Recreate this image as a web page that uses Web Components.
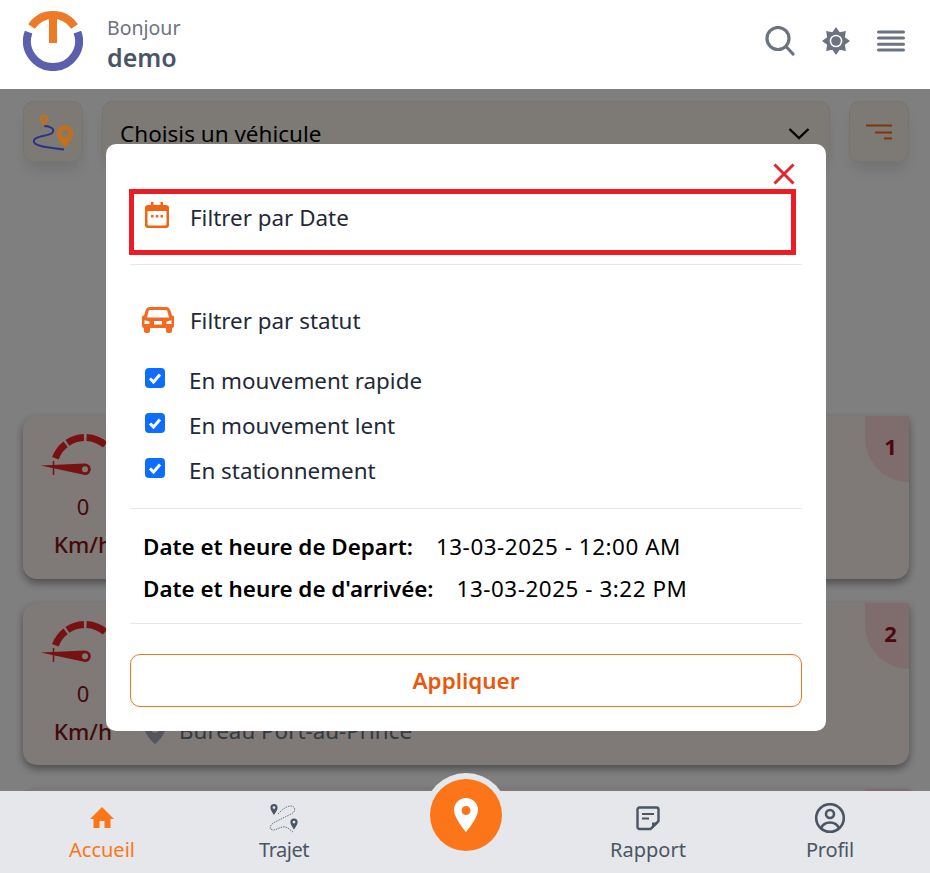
<!DOCTYPE html>
<html lang="fr">
<head>
<meta charset="utf-8">
<title>Filtres</title>
<style>
html, body { margin: 0; padding: 0; }
body { font-family: "Noto Sans", "Open Sans", sans-serif; }
</style>
</head>
<body>
<app-shell>
  <app-header slot="header"></app-header>
  <vehicle-toolbar></vehicle-toolbar>
  <div style="height: 206px"></div>
  <vehicle-card speed="0" rank="1"></vehicle-card>
  <vehicle-card speed="0" rank="2" address="Bureau Port-au-Prince"></vehicle-card>
  <vehicle-card></vehicle-card>
  <filter-modal slot="modal"></filter-modal>
  <bottom-nav slot="nav"></bottom-nav>
</app-shell>

<script>
const PIN = "M12 2a8 8 0 0 0-8 8c0 5.6 8 12 8 12s8-6.4 8-12a8 8 0 0 0-8-8zm0 11a3 3 0 1 1 0-6 3 3 0 0 1 0 6z";

// 8 pointed sun of the header
function sunPoints() {
    const points = [];
    for (let i = 0; i < 16; i++) {
        const radius = i % 2 ? 9.6 : 14;
        const angle = i * Math.PI / 8;
        points.push((14 + radius * Math.sin(angle)).toFixed(2) + "," + (14 - radius * Math.cos(angle)).toFixed(2));
    }
    return points.join(" ");
}

class AppShell extends HTMLElement {
    constructor() {
        super();
        this.attachShadow({mode: "open"}).innerHTML = `
            <style>
            :host { display: flex; flex-direction: column; width: 930px; height: 873px; overflow: hidden; background: #fff; }
            .main { position: relative; flex: 1; min-height: 0; overflow: hidden; }
            .content { display: flex; flex-direction: column; gap: 24px; padding: 12px 21px 0 23px; }
            .overlay { position: absolute; inset: 0; background: rgba(0, 0, 0, .5); display: flex; justify-content: center; align-items: flex-start; padding: 55px 0 0 2px; }
            </style>
            <slot name="header"></slot>
            <div class="main">
                <div class="content"><slot></slot></div>
                <div class="overlay"><slot name="modal"></slot></div>
            </div>
            <slot name="nav"></slot>
        `;
    }
}

class AppHeader extends HTMLElement {
    constructor() {
        super();
        this.attachShadow({mode: "open"}).innerHTML = `
            <style>
            :host { display: flex; align-items: center; height: 89px; padding: 0 25px 0 23px; box-sizing: border-box; background: #fff; position: relative; z-index: 1; }
            .logo { width: 60px; height: 60px; margin-bottom: 7px; margin-right: 24px; flex: none; }
            .hello { flex: 1; display: flex; flex-direction: column; margin-bottom: 4px; }
            .hi { font-size: 19.5px; line-height: 28px; color: #6b7280; }
            .name { font-size: 25px; line-height: 30px; font-weight: 600; color: #4b5563; }
            .icons { display: flex; align-items: center; gap: 27px; margin-bottom: 7px; }
            svg { display: block; }
            </style>
            <svg class="logo" viewBox="0 0 60 60" fill="none" stroke-width="8">
                <path d="M5.6 21.1A26 26 0 1 0 54.4 21.1" stroke="#5b60ad"/>
                <path d="M8.5 15.4A26 26 0 0 1 51.5 15.4" stroke="#ec7a26"/>
                <path d="M30 3V32" stroke="#ec7a26"/>
            </svg>
            <div class="hello">
                <span class="hi">Bonjour</span>
                <span class="name">demo</span>
            </div>
            <div class="icons">
                <svg width="30" height="30" viewBox="0 0 30 30" fill="none" stroke="#6b7280" stroke-width="3.200">
                    <circle cx="13" cy="12.500" r="11"/>
                    <path d="M21 20.500L28 28" stroke-linecap="round"/>
                </svg>
                <svg width="28" height="28" viewBox="0 0 28 28">
                    <polygon fill="#6b7280" points="${sunPoints()}"/>
                    <circle cx="14" cy="14" r="6.300" fill="#fff"/>
                    <circle cx="14" cy="14" r="4.800" fill="#6b7280"/>
                </svg>
                <svg width="28" height="22" viewBox="0 0 28 22" stroke="#6b7280" stroke-width="3" stroke-linecap="round">
                    <path d="M1.500 2H26.500M1.500 8H26.500M1.500 14.300H26.500M1.500 20H26.500"/>
                </svg>
            </div>
        `;
    }
}

class VehicleToolbar extends HTMLElement {
    constructor() {
        super();
        this.attachShadow({mode: "open"}).innerHTML = `
            <style>
            :host { display: flex; gap: 19px; height: 61px; }
            .square, .select { background: #faf4ec; border: 1px solid #f0e9e0; border-radius: 10px; box-sizing: border-box; box-shadow: 0 10px 15px -3px rgba(0,0,0,.12); }
            .square { width: 60px; flex: none; display: flex; align-items: center; justify-content: center; }
            .select { flex: 1; display: flex; align-items: center; justify-content: space-between; padding: 0 19px 0 17px; font-size: 22.5px; color: #000; }
            .select span { margin-top: 4px; }
            .select svg { margin-top: 4px; }
            .route { position: relative; z-index: 2; display: block; }
            </style>
            <div class="square">
                <svg class="route" width="46" height="46" viewBox="0 0 46 46" fill="none">
                    <path d="M14 17C20 17 26 20 22 24C18 27.500 7 26 4 31C2 36 12 38 34 40.500" stroke="#2a3384" stroke-width="2"/>
                    <path fill="#c2701c" fill-rule="evenodd" d="M14 5.500a4.200 4.200 0 0 0-4.200 4.200C9.800 13 14 17 14 17s4.200-4 4.200-7.300A4.200 4.200 0 0 0 14 5.500zm0 2.300a1.900 1.900 0 1 1 0 3.800 1.900 1.900 0 0 1 0-3.800z"/>
                    <path fill="#c2701c" fill-rule="evenodd" d="M35 16.200a8.300 8.300 0 0 0-8.300 8.300C26.700 30 35 39 35 39s8.300-9 8.300-14.500A8.300 8.300 0 0 0 35 16.200zm0 4.800a3.500 3.500 0 1 1 0 7 3.500 3.500 0 0 1 0-7z"/>
                </svg>
            </div>
            <div class="select">
                <span>Choisis un véhicule</span>
                <svg width="22" height="14" viewBox="0 0 22 14" fill="none" stroke="#000" stroke-width="2.400"><path d="M1.500 2L11 11L20.500 2"/></svg>
            </div>
            <div class="square">
                <svg width="28" height="16" viewBox="0 0 28 16" fill="none" stroke="#ff6a14" stroke-width="2"><path d="M1 1.500H27M10 8.500H27M19 14.500H27"/></svg>
            </div>
        `;
    }
}

class VehicleCard extends HTMLElement {
    constructor() {
        super();
        const address = this.getAttribute("address");
        const speed = this.getAttribute("speed");
        const rank = this.getAttribute("rank") || "";
        this.attachShadow({mode: "open"}).innerHTML = `
            <style>
            :host { display: flex; position: relative; flex: none; height: 162.5px; padding: 14px 0 0 17px; box-sizing: border-box; background: #fef2f0; border-radius: 14px 0 14px 14px; box-shadow: 0 4px 8px rgba(0,0,0,.4); }
            .speed { display: flex; flex-direction: column; align-items: center; width: 86px; flex: none; }
            svg { display: block; overflow: visible; }
            .value { font-size: 22px; line-height: 28px; margin-top: 14px; color: #861414; }
            .unit { font-size: 22.5px; line-height: 30px; font-weight: 500; margin-top: 10px; color: #861414; }
            .address { display: flex; align-items: center; gap: 14px; align-self: flex-start; margin: 99.5px 0 0 19px; font-size: 22.4px; line-height: 30px; color: #6b7280; }
            .rank { position: absolute; top: 0; right: 0; width: 44px; height: 66px; border-radius: 0 0 0 44px; background: #ffd8d8; display: flex; align-items: center; justify-content: center; padding: 0 0 6px 7px; box-sizing: border-box; font-size: 22px; font-weight: 700; color: #9a1020; }
            </style>
            ${speed ? `<div class="speed">
                <svg width="86" height="48" viewBox="0 0 86 48" fill="none">
                    <path d="M15.400 28.200A31.500 31.500 0 0 1 25.600 14.200M27.400 12.900A31.500 31.500 0 0 1 43.900 7.500M46.600 7.500A31.500 31.500 0 0 1 65.200 14.900" stroke="#f02222" stroke-width="7"/>
                    <path fill="#f02222" fill-rule="evenodd" d="M0.700 35.500L45 33.500a5.800 5.800 0 0 1 0 11.600zM45 36.300a3 3 0 1 0 0 6 3 3 0 0 0 0-6z"/>
                    <path d="M13.500 31V45" stroke="#f02222" stroke-width="1.500"/>
                </svg>
                <span class="value">${speed}</span>
                <span class="unit">Km/h</span>
            </div>` : ""}
            ${address ? `<div class="address">
                <svg width="20" height="25" viewBox="4 2 16 20" fill="#a8adb8"><path d="${PIN}"/></svg>
                <span>${address}</span>
            </div>` : ""}
            <div class="rank">${rank}</div>
        `;
    }
}

class FilterModal extends HTMLElement {
    constructor() {
        super();
        this.attachShadow({mode: "open"}).innerHTML = `
            <style>
            :host { display: block; width: 720px; height: 587px; box-sizing: border-box; padding: 45px 24px 0; background: #fff; border-radius: 10px; position: relative; color: #1f2937; font-size: 22.4px; }
            .close { position: absolute; top: 19px; right: 31px; }
            .date-row { display: flex; align-items: center; gap: 21px; height: 66px; box-sizing: border-box; margin: 0 6px 0 -1px; border: 5px solid #ed1c24; padding: 0 0 10px 11px; }
            .date-row svg { margin-top: -4px; }
            hr { border: 0; border-top: 1px solid #e5e7eb; margin: 0; }
            .status-row { display: flex; align-items: center; gap: 16px; padding-left: 12px; height: 32px; margin-top: 39px; }
            ul { list-style: none; margin: 28px 0 0; padding: 0 0 0 15px; display: flex; flex-direction: column; gap: 13px; }
            li { display: flex; align-items: center; gap: 24px; height: 32px; }
            .box { width: 20px; height: 20px; background: #0d6efd; border-radius: 4px; display: block; margin-top: -4px; }
            .times { display: flex; flex-direction: column; gap: 12px; padding: 23px 0 0 13px; color: #000; height: 94px; box-sizing: border-box; }
            .times div { display: flex; gap: 23px; line-height: 30px; }
            .times b { font-weight: 600; }
            .times span { letter-spacing: .55px; }
            .apply { display: flex; align-items: center; justify-content: center; height: 53px; box-sizing: border-box; border: 1px solid #f97316; border-radius: 10px; margin-top: 30px; font-weight: 600; color: #ea580c; }
            </style>
            <svg class="close" width="22" height="22" viewBox="0 0 22 22" stroke="#e5262c" stroke-width="3" fill="none"><path d="M1.500 1.500L20.500 20.500M20.500 1.500L1.500 20.500"/></svg>
            <div class="date-row">
                <svg width="24" height="26" viewBox="0 0 24 26">
                    <path fill="#f2640f" fill-rule="evenodd" d="M3 3h3V0h2.500v3h7V0H18v3h3a3 3 0 0 1 3 3v17a3 3 0 0 1-3 3H3a3 3 0 0 1-3-3V6a3 3 0 0 1 3-3zM2.500 9v13a1.500 1.500 0 0 0 1.500 1.500h16a1.500 1.500 0 0 0 1.500-1.500V9z"/>
                    <path fill="#f2640f" d="M6 13h2.500v2.500H6zM10.800 13h2.500v2.500h-2.500zM15.500 13H18v2.500h-2.500z"/>
                </svg>
                <span>Filtrer par Date</span>
            </div>
            <hr style="margin-top: 9px">
            <div class="status-row">
                <svg width="32" height="26" viewBox="0 0 32 26"><path fill="#f26a22" fill-rule="evenodd" d="M8 0h16c2 0 3.500 1 4.200 3L30 8.500h.500c1 0 1.500.8 1.500 1.500v9c0 1-.8 2-2 2v3c0 1-.8 2-2 2h-2c-1 0-2-1-2-2v-3H8v3c0 1-1 2-2 2H4c-1.200 0-2-1-2-2v-3c-1.200 0-2-1-2-2v-9c0-.7.500-1.500 1.500-1.500H2L3.800 3C4.500 1 6 0 8 0zm.500 3c-1 0-1.700.5-2 1.500L5 10.500h22l-1.500-6c-.3-1-1-1.500-2-1.500zM2.500 13.500c2 0 4 .5 5 1.500v2h-5zM29.500 13.500c-2 0-4 .5-5 1.500v2h5zM12 14h8v3.500h-8z"/></svg>
                <span>Filtrer par statut</span>
            </div>
            <ul>
                ${["En mouvement rapide", "En mouvement lent", "En stationnement"].map((label) => `
                    <li>
                        <svg class="box" viewBox="0 0 20 20"><path d="M5 10.500L8.500 14L15 6.500" fill="none" stroke="#fff" stroke-width="3"/></svg>
                        <span>${label}</span>
                    </li>`).join("")}
            </ul>
            <hr style="margin-top: 22px">
            <div class="times">
                <div><b>Date et heure de Depart:</b><span>13-03-2025 - 12:00 AM</span></div>
                <div><b>Date et heure de d'arrivée:</b><span>13-03-2025 - 3:22 PM</span></div>
            </div>
            <hr style="margin-top: 20px">
            <div class="apply">Appliquer</div>
        `;
    }
}

class BottomNav extends HTMLElement {
    constructor() {
        super();
        this.attachShadow({mode: "open"}).innerHTML = `
            <style>
            :host { display: grid; grid-template-columns: 204px 160px 204px 160px 202px; height: 82px; background: #e5e7eb; position: relative; color: #4b5563; flex: none; }
            .item { display: flex; flex-direction: column; align-items: center; font-size: 20px; line-height: 28px; padding-top: 12px; }
            .item svg { display: block; height: 32px; margin-bottom: 1px; }
            .tight { letter-spacing: -.5px; }
            .profil { padding-left: 2px; letter-spacing: -.2px; }
            .active { color: #fc7518; }
            .center { position: absolute; left: 430px; top: -12px; width: 72px; height: 72px; border-radius: 50%; background: #fc7518; box-shadow: 0 0 0 6px #e5e7eb; display: flex; align-items: center; justify-content: center; }
            </style>
            <div class="item active">
                <svg width="26" height="32" viewBox="0 0 26 32"><path fill="#fc7518" d="M13 4L1 16h3.500v9h6v-7h5v7h6v-9H25z"/></svg>
                <span>Accueil</span>
            </div>
            <div class="item tight">
                <svg width="30" height="32" viewBox="0 0 30 32" fill="none">
                    <path d="M9 11C13 7 17 3 22 3C27 3 27 9 22 11L6 19C0 22 0 27 4 27C8 27 12 23 16 24C19 24.500 21 27 24 29" stroke="#6b7280" stroke-width="1" stroke-dasharray="1.500 1"/>
                    <path fill="#4b5563" fill-rule="evenodd" d="M5 1a3.600 3.600 0 0 0-3.600 3.600C1.400 7.500 5 12 5 12s3.600-4.500 3.600-7.400A3.600 3.600 0 0 0 5 1zm0 2.200a1.400 1.400 0 1 1 0 2.800 1.400 1.400 0 0 1 0-2.800z"/>
                    <path fill="#4b5563" fill-rule="evenodd" d="M25 15.500a3.600 3.600 0 0 0-3.600 3.600C21.400 22 25 26.500 25 26.500s3.600-4.500 3.600-7.400A3.600 3.600 0 0 0 25 15.500zm0 2.200a1.400 1.400 0 1 1 0 2.800 1.400 1.400 0 0 1 0-2.800z"/>
                </svg>
                <span>Trajet</span>
            </div>
            <div></div>
            <div class="item">
                <svg width="24" height="32" viewBox="0 0 24 32" fill="none">
                    <path d="M14.500 26H3.500A2 2 0 0 1 1.500 24V6.500a2 2 0 0 1 2-2h17a2 2 0 0 1 2 2V18z" stroke="#4b5563" stroke-width="2.400"/>
                    <path d="M16 26v-6.500h7z" fill="#4b5563"/>
                    <path d="M6 11h12M6 15.500h7" stroke="#4b5563" stroke-width="2.200"/>
                </svg>
                <span>Rapport</span>
            </div>
            <div class="item profil">
                <svg width="32" height="32" viewBox="0 0 32 32" fill="none" stroke="#4b5563" stroke-width="2.600">
                    <circle cx="16" cy="15" r="13.800"/>
                    <circle cx="16" cy="11" r="4"/>
                    <path d="M7 25c2-4 5-5.500 9-5.500s7 1.500 9 5.500"/>
                </svg>
                <span>Profil</span>
            </div>
            <div class="center">
                <svg width="24" height="34" viewBox="0 0 24 34"><path fill="#fff" fill-rule="evenodd" d="M12 0a12 12 0 0 0-12 12c0 8 12 22 12 22s12-14 12-22A12 12 0 0 0 12 0zm0 8a4.500 4.500 0 1 1 0 9 4.500 4.500 0 0 1 0-9z"/></svg>
            </div>
        `;
    }
}

customElements.define("app-shell", AppShell);
customElements.define("app-header", AppHeader);
customElements.define("vehicle-toolbar", VehicleToolbar);
customElements.define("vehicle-card", VehicleCard);
customElements.define("filter-modal", FilterModal);
customElements.define("bottom-nav", BottomNav);
</script>
</body>
</html>
